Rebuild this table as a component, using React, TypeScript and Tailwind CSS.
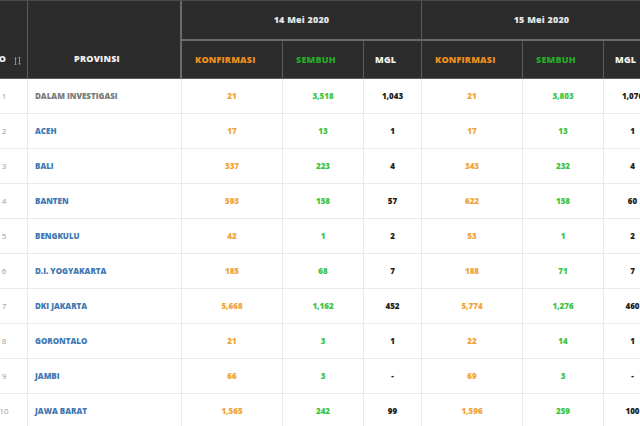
import React from 'react';

type Row = {
  no: number;
  provinsi: string;
  a: [string, string, string];
  b: [string, string, string];
};

const rows: Row[] = [
  { no: 1, provinsi: 'DALAM INVESTIGASI', a: ['21', '3,518', '1,043'], b: ['21', '3,803', '1,076'] },
  { no: 2, provinsi: 'ACEH', a: ['17', '13', '1'], b: ['17', '13', '1'] },
  { no: 3, provinsi: 'BALI', a: ['337', '223', '4'], b: ['343', '232', '4'] },
  { no: 4, provinsi: 'BANTEN', a: ['593', '158', '57'], b: ['622', '158', '60'] },
  { no: 5, provinsi: 'BENGKULU', a: ['42', '1', '2'], b: ['53', '1', '2'] },
  { no: 6, provinsi: 'D.I. YOGYAKARTA', a: ['185', '68', '7'], b: ['188', '71', '7'] },
  { no: 7, provinsi: 'DKI JAKARTA', a: ['5,668', '1,162', '452'], b: ['5,774', '1,276', '460'] },
  { no: 8, provinsi: 'GORONTALO', a: ['21', '3', '1'], b: ['22', '14', '1'] },
  { no: 9, provinsi: 'JAMBI', a: ['66', '3', '-'], b: ['69', '3', '-'] },
  { no: 10, provinsi: 'JAWA BARAT', a: ['1,565', '242', '99'], b: ['1,596', '259', '100'] },
];

const cols = 'grid grid-cols-[48px_154px_101px_81px_58px_101px_81px_58px]';
const hd = 'flex items-center justify-center border-r border-b border-[#5a5a5a] text-[9px] font-extrabold tracking-[0.2px]';
const td = 'flex items-center justify-center border-r border-b border-[#e9e9e9] text-[8px] font-extrabold';

function SortIcon() {
  return (
    <svg width="7" height="8" viewBox="0 0 7 8" className="ml-[8px]">
      <path d="M1.5 0.5 V7.5 M0.5 7.5 H2.5 M0.5 1.5 L1.5 0.5 L2.5 1.5" stroke="#8a8a8a" strokeWidth="1" fill="none" />
      <path d="M5.5 0.5 V7.5 M4.5 0.5 H6.5 M4.5 6.5 L5.5 7.5 L6.5 6.5" stroke="#8a8a8a" strokeWidth="1" fill="none" />
    </svg>
  );
}

function SubHeaders() {
  return (
    <>
      <div className={`${hd} justify-start pl-[13px] text-[#f0901e]`}>KONFIRMASI</div>
      <div className={`${hd} justify-start pl-[13px] text-[#27a827]`}>SEMBUH</div>
      <div className={`${hd} justify-start pl-[11px] text-[#f2f2f2]`}>MGL</div>
    </>
  );
}

export default function App() {
  return (
    <div className="w-[640px] h-[426px] overflow-hidden bg-white" style={{ fontFamily: '"Open Sans", "Noto Sans", sans-serif' }}>
      <div className="ml-[-20px] w-[682px]">
        <div className={`${cols} grid-rows-[40px_38px] bg-[#2c2c2c] border-t border-[#4a4a4a]`}>
          <div className={`${hd} row-span-2 items-end justify-end pr-[6px] pb-[13px] text-[#f2f2f2]`}>
            NO
            <SortIcon />
          </div>
          <div className={`${hd} row-span-2 items-end pb-[13px] pr-[14px] text-[#f2f2f2] border-r-2 border-r-[#6a6a6a]`}>PROVINSI</div>
          <div className={`${hd} col-span-3 text-[#e6e6e6] border-b-2 border-b-[#6a6a6a]`}>14 Mei 2020</div>
          <div className={`${hd} col-span-3 text-[#e6e6e6] border-b-2 border-b-[#6a6a6a]`}>15 Mei 2020</div>
          <SubHeaders />
          <SubHeaders />
        </div>
        {rows.map((r) => (
          <div key={r.no} className={`${cols} h-[35px]`}>
            <div className={`${td} justify-end pr-[18px] font-normal text-[#9a9a9a]`}>
              <span className="w-[10px] text-center">{r.no}</span>
            </div>
            <div className={`${td} justify-start pl-[7px] ${r.no === 1 ? 'text-[#7a7a7a]' : 'text-[#3f78b3]'}`}>{r.provinsi}</div>
            {[r.a, r.b].map((g, i) => (
              <React.Fragment key={i}>
                <div className={`${td} text-[#f0a33c]`}>{g[0]}</div>
                <div className={`${td} text-[#3fc43f]`}>{g[1]}</div>
                <div className={`${td} text-[#1e1e1e]`}>{g[2]}</div>
              </React.Fragment>
            ))}
          </div>
        ))}
      </div>
    </div>
  );
}
